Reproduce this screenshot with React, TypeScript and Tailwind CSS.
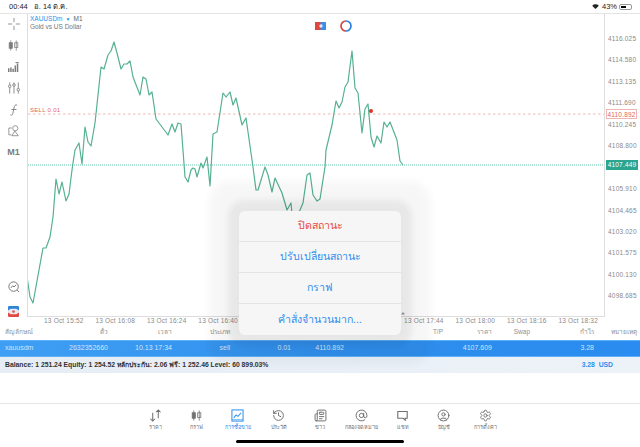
import React from 'react';
import { AtSign, CircleUser, History, Newspaper, Settings } from 'lucide-react';

const LINE =
  '27.5,280 30,297 33,303 43,248 46,248 50,237 53,217 56,179 59,194 62,182 66,201 69,194 72,170 73,163 75,150 79,143 82,164 85,127 88,142 91,146 95,123 101,67 104,69 108,55 111,51 114,42 117,53 121,69 124,64 127,64 130,61 133,77 140,95 143,77 146,79 149,95 152,92 156,119 162,127 168,135 172,124 175,132 178,123 181,124 185,177 188,182 191,170 193,168 195,169 197,177 201,163 203,168 207,157 210,186 213,134 217,132 223,93 226,97 230,92 233,105 236,98 242,125 246,118 253,167 256,190 258,190 265,167 268,175 272,192 275,178 282,193 287,210 291,203 293,225 300,210 303,203 307,175 310,173 313,195 317,201 320,199 325,167 326,150 332,125 336,101 339,108 342,102 345,87 348,82 352,51 355,88 358,93 362,133 365,109 368,104 371,137 374,147 377,136 381,143 384,122 387,127 390,122 397,140 400,161 403,165';

const PRICES = ['4116.025', '4114.580', '4113.135', '4111.690', '4110.245', '4108.800', '', '4105.910', '4104.465', '4103.020', '4101.575', '4100.130', '4098.685'];
// the three labels under the action sheet are left blank, they can't be seen
const TIMES = ['13 Oct 15:52', '13 Oct 16:08', '13 Oct 16:24', '13 Oct 16:40', '', '', '', '13 Oct 17:44', '13 Oct 18:00', '13 Oct 18:16', '13 Oct 18:32'];
const HEADERS = ['สัญลักษณ์', 'ตั๋ว', 'เวลา', 'ประเภท', 'Volume', 'ราคา', 'S/L', 'T/P', 'ราคา', 'Swap', 'กำไร', 'หมายเหตุ'];
const VALUES = ['xauusdm', '2632352660', '10.13 17:34', 'sell', '0.01', '4110.892', '', '', '4107.609', '', '3.28', ''];
const GRID = 'grid grid-cols-[45px_58px_64px_58px_61px_53px_48px_51px_49px_38px_64px_43px]';

function Candles({ className }: { className?: string }) {
  return (
    <svg viewBox="0 0 14 14" className={className} fill="none" stroke="currentColor" strokeWidth="1">
      <path d="M3.5 0.5v13M10.5 0.5v13" />
      <rect x="1.5" y="3.5" width="4" height="7" fill="currentColor" />
      <rect x="8.5" y="3.5" width="4" height="6" />
    </svg>
  );
}

function ToolIcon({ children }: { children: React.ReactNode }) {
  return <div className="h-[21.5px] flex items-center justify-center text-[#7c7c7c]">{children}</div>;
}

function Toolbar() {
  return (
    <div className="w-[27px] shrink-0 flex flex-col -mt-[1px]">
      <div className="flex flex-col">
        <ToolIcon>
          <svg viewBox="0 0 12 12" className="w-3 h-3" fill="none" stroke="currentColor" strokeWidth="0.8">
            <path d="M6 0v4.2M6 7.8V12M0 6h4.2M7.8 6H12" />
          </svg>
        </ToolIcon>
        <ToolIcon>
          <Candles className="w-[11px] h-[11px]" />
        </ToolIcon>
        <ToolIcon>
          <svg viewBox="0 0 12 12" className="w-[11px] h-[11px]" fill="currentColor">
            <path d="M0 8h1.6v4H0zM2.4 7h1.6v5H2.4zM4.8 8.5h1.6V12H4.8zM7.2 5h1.6v7H7.2zM9.6 3h1.6v9H9.6z" />
            <path d="M8 1h4v1H10.5v1H9.500V2H8z" />
          </svg>
        </ToolIcon>
        <ToolIcon>
          <svg viewBox="0 0 14 14" className="w-3 h-3" fill="none" stroke="currentColor" strokeWidth="1">
            <path d="M2 0.500v13M7 0.500v13M12 0.500v13" />
            <circle cx="2" cy="5" r="1.500" fill="#fff" />
            <circle cx="7" cy="3.500" r="1.500" fill="#fff" />
            <circle cx="12" cy="9" r="1.500" fill="#fff" />
          </svg>
        </ToolIcon>
        <ToolIcon>
          <svg viewBox="0 0 12 12" className="w-3 h-3" fill="none" stroke="currentColor" strokeWidth="0.9">
            <path d="M9 1C7 0.500 6.500 1.500 6 4L4.800 9.500C4.500 11 3.800 11.500 2.500 11M3.500 5.500H8.500" />
          </svg>
        </ToolIcon>
        <ToolIcon>
          <svg viewBox="0 0 14 14" className="w-3 h-3" fill="none" stroke="currentColor" strokeWidth="0.9">
            <path d="M4.500 3.500H1v8h3" />
            <circle cx="8.500" cy="3.800" r="3" />
            <path d="M8 7l-3.500 5.500H12z" />
          </svg>
        </ToolIcon>
        <div className="h-[21.5px] flex items-center justify-center text-[9px] font-bold text-[#7c7c7c]">M1</div>
      </div>
      <div className="mt-auto flex flex-col items-center">
        <svg viewBox="0 0 14 14" className="w-3 h-3 mb-[13px] text-[#666]" fill="none" stroke="currentColor" strokeWidth="1">
          <circle cx="6.500" cy="6.500" r="5.500" />
          <path d="M3.500 8l2-2.500 1.500 1.500L9.500 4.500M10.500 10.500l2.500 2.500" />
        </svg>
        <svg viewBox="0 0 12 12" className="w-[11px] h-[11px]">
          <rect width="12" height="12" rx="1.500" fill="#e8e8ee" />
          <path d="M0 1.500A1.500 1.500 0 0 1 1.500 0h9A1.500 1.500 0 0 1 12 1.500V5L9 3H3L0 5z" fill="#2b84d8" />
          <path d="M0 7l3 2h6l3-2v3.500A1.500 1.500 0 0 1 10.500 12h-9A1.500 1.500 0 0 1 0 10.500z" fill="#e2483f" />
          <circle cx="6" cy="6" r="1.500" fill="#d8605a" />
        </svg>
      </div>
    </div>
  );
}

function Chart() {
  return (
    <div className="relative w-[578px] h-[303px] shrink-0 border-l border-r border-b border-[#dddddd]">
      <svg viewBox="28 14 576 302" className="block w-[576px] h-[302px]" fill="none">
        <line x1="28" x2="604" y1="114" y2="114" stroke="#eeb9b4" strokeWidth="1" strokeDasharray="2.500 2.500" />
        <line x1="28" x2="604" y1="165" y2="165" stroke="#62c7ae" strokeWidth="1" strokeDasharray="1 1" />
        <polyline points={LINE} stroke="#55b191" strokeWidth="1.200" strokeLinejoin="round" />
        <circle cx="371" cy="111" r="2" fill="#e0322c" />
        <path d="M403 312l2 2.500h-4z" fill="#999999" />
        <rect x="315" y="22" width="11" height="8" rx="0.500" fill="#3b8ee8" />
        <rect x="315" y="22" width="5.500" height="8" rx="0.500" fill="#e0483e" />
        <circle cx="321" cy="26" r="1.700" fill="#dfe7f0" />
        <path d="M346 21a5 5 0 0 0 0 10" stroke="#d8433a" strokeWidth="1.700" />
        <path d="M346 21a5 5 0 0 1 0 10" stroke="#2f80e0" strokeWidth="1.700" />
      </svg>
      <div className="absolute left-[2px] top-[1px] leading-[8px] text-[6.500px]">
        <div>
          <span className="font-medium text-[#2f8fee]">XAUUSDm</span>
          <span className="text-[#2f8fee] text-[5px] mx-[3px]">▼</span>
          <span className="text-[#666]">M1</span>
        </div>
        <div className="text-[#777]">Gold vs US Dollar</div>
      </div>
      <div className="absolute left-[2px] top-[92px] text-[6px] tracking-[0.3px] text-[#e5635c]">SELL 0.01</div>
    </div>
  );
}

function PriceAxis() {
  return (
    <div className="relative flex-1 pt-[14px] text-[6.500px] text-[#8a8a8a] tracking-[0.2px]">
      {PRICES.map((p, i) => (
        <div key={i} className="h-[21.450px] pl-[3px] leading-[21px]">
          {p}
        </div>
      ))}
      <div className="absolute left-[1px] top-[95px] w-[31px] h-[10px] leading-[9px] text-center border border-[#efb5b0] bg-white text-[#e5635c]">4110.892</div>
      <div className="absolute left-[1px] top-[146px] w-[32px] h-[10px] leading-[10px] text-center bg-[#2aa58f] text-white">4107.449</div>
    </div>
  );
}

function TableHeader() {
  return (
    <div className="h-[16px] pl-[5px] bg-white text-[6.500px] text-[#8f8f8f] flex items-center">
      <div className={`${GRID} w-full`}>
        {HEADERS.map((text, c) => (
          <div key={c} className={c === 0 ? 'text-left' : 'text-right'}>
            {text}
          </div>
        ))}
      </div>
    </div>
  );
}

function PositionRow() {
  return (
    <div className="h-[17px] pl-[5px] flex items-center text-[7px] text-[#cfe4fb] bg-[linear-gradient(90deg,#3f9ff4,#2f8eec_55%,#2a8cf0)] border-y border-[#5db0f5]">
      <div className={`${GRID} w-full`}>
        {VALUES.map((v, i) => (
          <div key={i} className={i === 0 ? 'text-left' : 'text-right'}>
            {v}
          </div>
        ))}
      </div>
    </div>
  );
}

function BalanceRow() {
  return (
    <div className="h-[16px] pl-[5px] flex items-center text-[6.800px] font-bold text-[#333] bg-[linear-gradient(90deg,#e6edf5,#edf2f8)]">
      <span>Balance: 1 251.24 Equity: 1 254.52 หลักประกัน: 2.06 ฟรี: 1 252.46 Level: 60 899.03%</span>
      <span className="ml-auto mr-[27px] text-[#2f8fee]">3.28&nbsp;&nbsp;USD</span>
    </div>
  );
}

function Tab({ label, active, children }: { label: string; active?: boolean; children: React.ReactNode }) {
  return (
    <div className={`w-[41.250px] flex flex-col items-center ${active ? 'text-[#2f8fee]' : 'text-[#6f6f6f]'}`}>
      <div className="h-[14px] flex items-center justify-center">{children}</div>
      <div className="mt-[1px] text-[5.500px] leading-[8px] whitespace-nowrap">{label}</div>
    </div>
  );
}

function TabBar() {
  const icon = 'w-[13px] h-[13px]';
  return (
    <div className="h-[44px] shrink-0 border-t border-[#e6e6e6] pt-[4px] relative">
      <div className="flex justify-center">
        <Tab label="ราคา">
          <svg viewBox="0 0 14 14" className={icon} fill="none" stroke="currentColor" strokeWidth="1.100">
            <path d="M4 4v9M1.500 10.500L4 13l2.500-2.500M10 10V1M7.500 3.500L10 1l2.500 2.500" />
          </svg>
        </Tab>
        <Tab label="กราฟ">
          <Candles className="w-[11px] h-[13px]" />
        </Tab>
        <Tab label="การซื้อขาย" active>
          <svg viewBox="0 0 14 14" className={icon} fill="none" stroke="currentColor" strokeWidth="1.100">
            <rect x="1" y="1" width="12" height="12" />
            <path d="M3 9.500l2.500-3 2 1.500L11 4" />
            <path d="M1 11.500h12" strokeWidth="0.700" />
          </svg>
        </Tab>
        <Tab label="ประวัติ">
          <History className={icon} strokeWidth={1.800} />
        </Tab>
        <Tab label="ข่าว">
          <Newspaper className={icon} strokeWidth={1.800} />
        </Tab>
        <Tab label="กล่องจดหมาย">
          <AtSign className={icon} strokeWidth={1.800} />
        </Tab>
        <Tab label="แชท">
          <svg viewBox="0 0 14 14" className="w-[11px] h-[11px]" fill="none" stroke="currentColor" strokeWidth="1.400">
            <path d="M1 2h12v8.500h-2.500V13L8 10.500H1z" />
          </svg>
        </Tab>
        <Tab label="บัญชี">
          <CircleUser className={icon} strokeWidth={1.800} />
        </Tab>
        <Tab label="การตั้งค่า">
          <Settings className={icon} strokeWidth={1.700} />
        </Tab>
      </div>
      <div className="absolute bottom-[4px] left-[236px] w-[168px] h-[3px] rounded-full bg-black" />
    </div>
  );
}

function ActionSheet() {
  const rows = [
    { text: 'ปิดสถานะ', color: 'text-[#e8483f]' },
    { text: 'ปรับเปลี่ยนสถานะ', color: 'text-[#2f8fee]' },
    { text: 'กราฟ', color: 'text-[#2f8fee]' },
    { text: 'คำสั่งจำนวนมาก...', color: 'text-[#2f8fee]' },
  ];
  return (
    <div className="absolute left-[239px] top-[211px] w-[162px] rounded-[6px] bg-[#f6f6f6] divide-y divide-[#e4e4e4] shadow-[0_0_6px_11px_rgba(0,0,0,0.06),0_0_8px_30px_rgba(0,0,0,0.035)]">
      {rows.map((r) => (
        <div key={r.text} className={`h-[31px] flex items-center justify-center text-[10.600px] font-medium ${r.color}`}>
          {r.text}
        </div>
      ))}
    </div>
  );
}

export default function App() {
  return (
    <div className="relative w-[640px] h-[447px] overflow-hidden bg-white font-['Liberation_Sans','Noto_Sans',sans-serif]">
      <div className="h-[13px] flex items-center px-[9px] text-[7.500px] text-[#222]">
        <span>00:44</span>
        <span className="ml-[6px]">อ. 14 ต.ค.</span>
        <svg viewBox="0 0 12 9" className="ml-auto w-[7px] h-[5px]" fill="#222">
          <path d="M6 9L0 3a8.500 8.500 0 0 1 12 0z" />
        </svg>
        <span className="ml-[3px]">43%</span>
        <div className="ml-[2px] w-[13px] h-[6px] rounded-[2px] border border-[#999] p-[1px] mr-[-1px]">
          <div className="w-[5px] h-full bg-black" />
        </div>
      </div>
      <div className="flex h-[303px] border-t border-[#e4e4e4] box-content">
        <Toolbar />
        <Chart />
        <PriceAxis />
      </div>
      <div className="h-[7px] pl-[44px] flex items-center text-[6.500px] tracking-[0.2px] text-[#8a8a8a]">
        {TIMES.map((t, i) => (
          <div key={i} className="w-[51.450px] shrink-0 whitespace-nowrap">
            {t}
          </div>
        ))}
      </div>
      <TableHeader />
      <PositionRow />
      <BalanceRow />
      <div className="h-[30px]" />
      <TabBar />
      <ActionSheet />
    </div>
  );
}
